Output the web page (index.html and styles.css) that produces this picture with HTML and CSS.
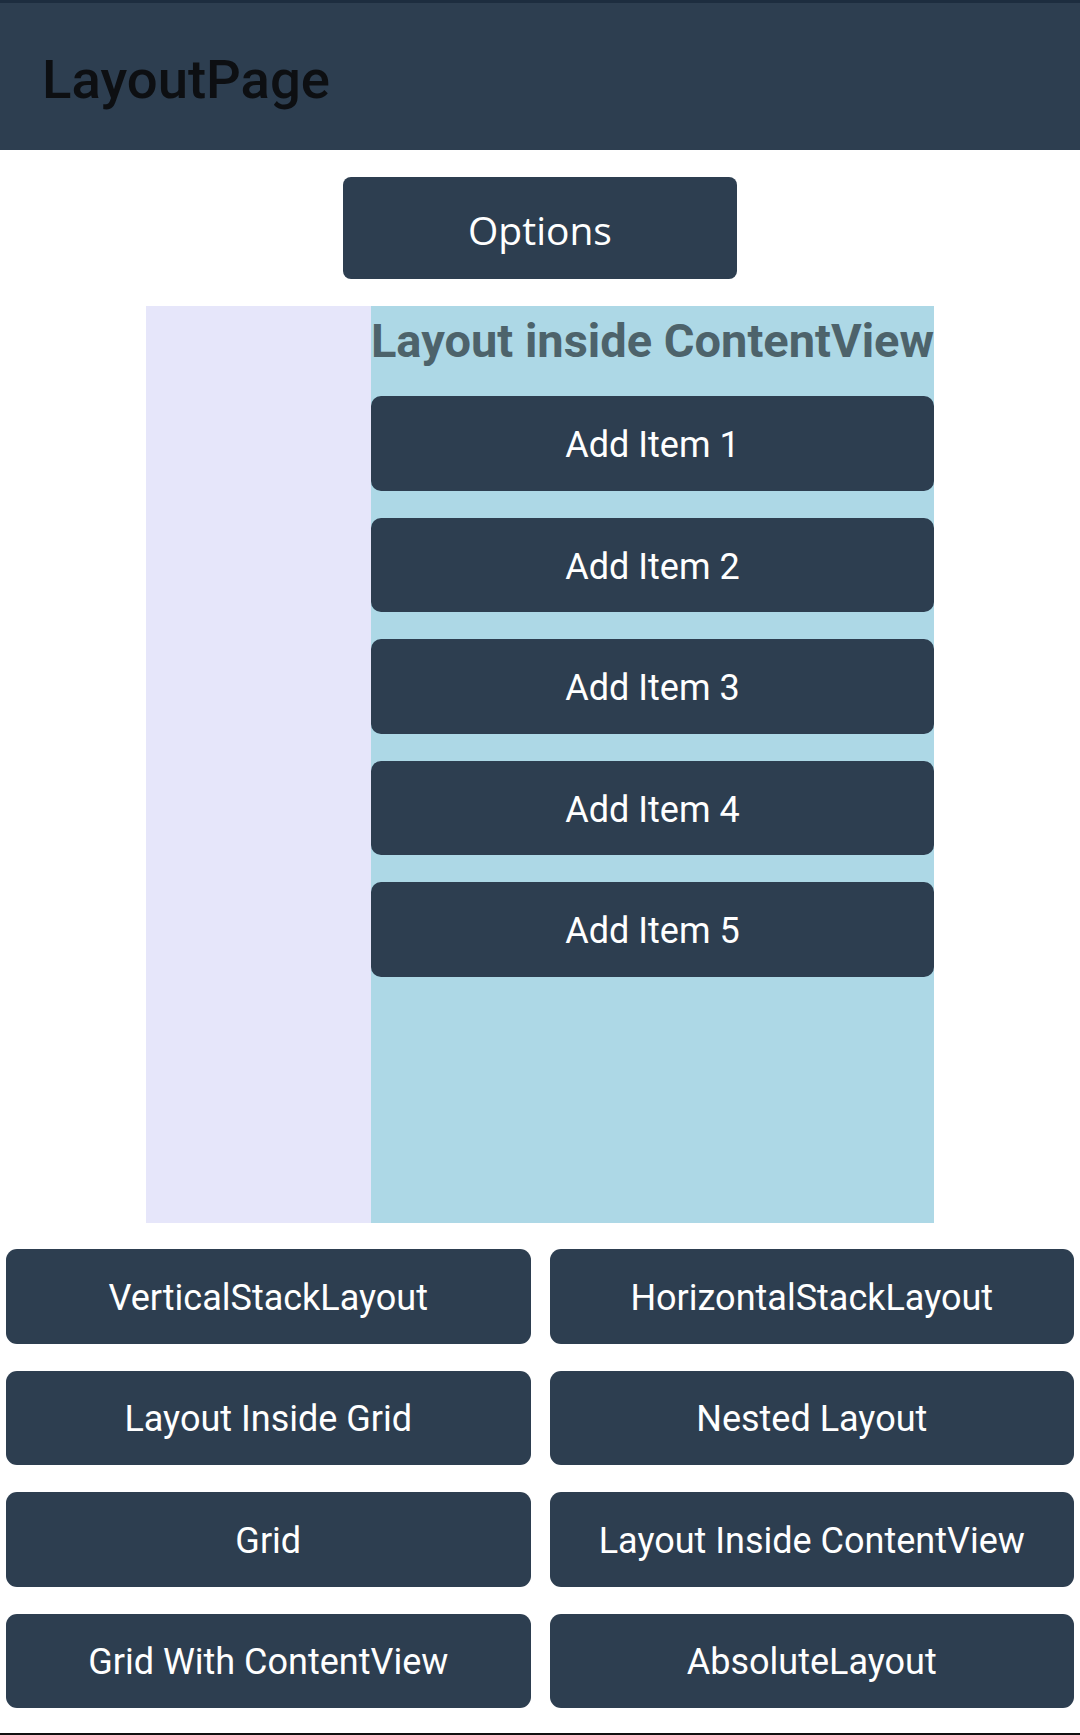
FILE: index.html
```html
<!DOCTYPE html>
<html lang="en">
<head>
<meta charset="utf-8">
<title>LayoutPage</title>
<link rel="stylesheet" href="styles.css">
</head>
<body>
<div class="page">
  <header class="appbar">
    <h1 class="appbar-title">LayoutPage</h1>
  </header>

  <div class="options-row">
    <button class="btn btn-options">Options</button>
  </div>

  <div class="content-view">
    <div class="side-pane"></div>
    <div class="main-pane">
      <div class="pane-title">Layout inside ContentView</div>
      <div class="item-list">
        <button class="btn btn-item">Add Item 1</button>
        <button class="btn btn-item">Add Item 2</button>
        <button class="btn btn-item">Add Item 3</button>
        <button class="btn btn-item">Add Item 4</button>
        <button class="btn btn-item">Add Item 5</button>
      </div>
    </div>
  </div>

  <div class="nav-grid">
    <button class="btn btn-nav">VerticalStackLayout</button>
    <button class="btn btn-nav">HorizontalStackLayout</button>
    <button class="btn btn-nav">Layout Inside Grid</button>
    <button class="btn btn-nav">Nested Layout</button>
    <button class="btn btn-nav">Grid</button>
    <button class="btn btn-nav">Layout Inside ContentView</button>
    <button class="btn btn-nav">Grid With ContentView</button>
    <button class="btn btn-nav">AbsoluteLayout</button>
  </div>

  <div class="bottom-rule"></div>
</div>
</body>
</html>
```

FILE: styles.css
```css
* {
  box-sizing: border-box;
}

html, body {
  margin: 0;
  padding: 0;
  background: #ffffff;
}

body {
  font-family: Roboto, "Liberation Sans", sans-serif;
}

.page {
  display: flex;
  flex-direction: column;
  min-height: 1735px;
}

.appbar {
  height: 150px;
  background: #2d3e50;
  border-top: 3px solid #1d2d3f;
  padding: 6px 0 0 42px;
  display: flex;
  align-items: center;
}

.appbar-title {
  margin: 0;
  font-family: Roboto, sans-serif;
  font-weight: 500;
  font-size: 54.5px;
  line-height: 1;
  color: #0d0f12;
}

.btn {
  border: none;
  margin: 0;
  padding: 0;
  background: #2d3e50;
  color: #ffffff;
  font-family: Roboto, sans-serif;
  font-size: 36px;
  font-weight: 400;
  line-height: 1;
  border-radius: 10px;
  display: flex;
  align-items: center;
  justify-content: center;
  white-space: nowrap;
}

.options-row {
  display: flex;
  justify-content: center;
  margin-top: 27px;
}

.btn-options {
  width: 394px;
  height: 102px;
  border-radius: 8px;
  font-family: "Open Sans", sans-serif;
  font-size: 39px;
  padding-top: 2px;
}

.content-view {
  display: flex;
  align-self: center;
  width: 788px;
  height: 917px;
  margin-top: 27px;
}

.side-pane {
  width: 225px;
  background: #e6e6fa;
}

.main-pane {
  flex: 1;
  background: #add8e6;
  display: flex;
  flex-direction: column;
}

.pane-title {
  margin-top: 7px;
  font-family: Roboto, sans-serif;
  font-weight: 700;
  font-size: 47px;
  line-height: 55px;
  color: #4d636b;
  text-align: center;
  white-space: nowrap;
}

.item-list {
  display: flex;
  flex-direction: column;
  gap: 27px;
  margin-top: 28px;
}

.btn-item {
  height: 94.5px;
  padding-top: 4px;
}

.nav-grid {
  display: grid;
  grid-template-columns: 1fr 1fr;
  column-gap: 19px;
  row-gap: 27px;
  padding: 0 6px;
  margin-top: 26px;
}

.btn-nav {
  height: 94.5px;
  border-radius: 11px;
  padding-top: 3px;
}

.bottom-rule {
  margin-top: auto;
  height: 2px;
  background: #111111;
}
```
